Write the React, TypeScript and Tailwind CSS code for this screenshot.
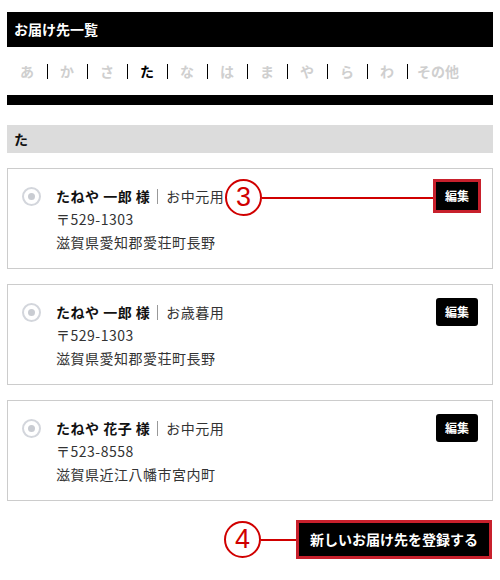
import React from "react";

const kana = ["あ", "か", "さ", "た", "な", "は", "ま", "や", "ら", "わ"];

type Addr = { name: string; tag: string; zip: string; addr: string };
const items: Addr[] = [
  { name: "たねや 一郎 様", tag: "お中元用", zip: "〒529-1303", addr: "滋賀県愛知郡愛荘町長野" },
  { name: "たねや 一郎 様", tag: "お歳暮用", zip: "〒529-1303", addr: "滋賀県愛知郡愛荘町長野" },
  { name: "たねや 花子 様", tag: "お中元用", zip: "〒523-8558", addr: "滋賀県近江八幡市宮内町" },
];

function Marker({ n }: { n: string }) {
  return (
    <div className="flex items-center">
      <div className="w-[37px] h-[37px] rounded-full border-2 border-[#d00000] bg-white flex items-center justify-center text-[#d00000] text-[27px] leading-none font-normal" style={{ fontFamily: '"Liberation Sans", Arial, sans-serif' }}>
        {n}
      </div>
    </div>
  );
}

function Card({ a, first }: { a: Addr; first: boolean }) {
  return (
    <div className="relative border border-[#cccccc] bg-white pl-[14px] pr-[14px] pt-[16px] pb-[14px] flex">
      <div className="pt-[2px] mr-[15px]">
        <div className="w-[19px] h-[19px] rounded-full border-2 border-[#d3d6dc] flex items-center justify-center">
          <div className="w-[7px] h-[7px] rounded-full bg-[#c9ccd2]" />
        </div>
      </div>
      <div className="flex-1 text-[14px] leading-[23px] text-[#222] tracking-[0.5px]">
        <div className="flex items-center">
          <span className="font-bold text-[#111]">{a.name}</span>
          <span className="inline-block w-px h-[15px] bg-[#999] ml-[7px] mr-[8px]" />
          <span className="text-[#333]">{a.tag}</span>
        </div>
        <div className="text-[#333]">{a.zip}</div>
        <div className="text-[#333]">{a.addr}</div>
      </div>
      <div className="absolute right-[14px] top-[13px]">
        <button className={"w-[42px] h-[28px] bg-black text-white text-[12px] font-bold flex items-center justify-center " + (first ? "rounded-none outline-[3px] outline-solid outline-[#c8202c]" : "rounded-[3px]")}>
          編集
        </button>
      </div>
      {first && (
        <div className="absolute left-[217px] top-[10px] flex items-center">
          <Marker n="3" />
          <div className="w-[171px] h-[2px] bg-[#d00000]" />
        </div>
      )}
    </div>
  );
}

export default function App() {
  return (
    <div className="w-[500px] h-[580px] bg-white px-[7px] pt-[12px]" style={{ fontFamily: '"Noto Sans CJK JP", "Noto Sans", sans-serif' }}>
      <div className="bg-black h-[35px] flex items-center pl-[7px] text-white font-bold text-[14px]">お届け先一覧</div>
      <div className="h-[48px] flex items-center pl-[13px] text-[14px] font-bold text-[#cfcfcf]">
        {kana.map((k, i) => (
          <React.Fragment key={k}>
            <span className={k === "た" ? "text-black" : ""}>{k}</span>
            <span className={"inline-block w-px h-[15px] bg-black " + (i === 9 ? "ml-[13px] mr-[9px]" : "ml-[13px] mr-[12px]")} />
          </React.Fragment>
        ))}
        <span>その他</span>
      </div>
      <div className="h-[10px] bg-black" />
      <div className="mt-[20px] h-[28px] bg-[#dcdcdc] flex items-center pl-[7px] text-[14px] font-bold text-[#111]">た</div>
      <div className="mt-[15px] flex flex-col gap-[15px]">
        {items.map((a, i) => (
          <Card key={i} a={a} first={i === 0} />
        ))}
      </div>
      <div className="mt-[19px] flex justify-end items-center pr-[1px]">
        <Marker n="4" />
        <div className="w-[35px] h-[2px] bg-[#d00000]" />
        <button className="h-[39px] w-[196px] bg-black border-[3px] border-[#c8202c] text-white font-bold text-[14px] flex items-center justify-center">
          新しいお届け先を登録する
        </button>
      </div>
    </div>
  );
}
